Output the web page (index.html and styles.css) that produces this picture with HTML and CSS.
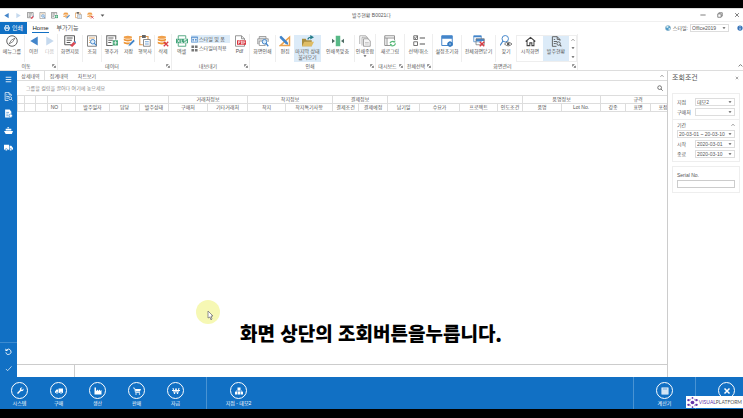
FILE: index.html
```html
<!DOCTYPE html>
<html lang="ko">
<head>
<meta charset="utf-8">
<title>발주현황</title>
<link rel="stylesheet" href="styles.css">
</head>
<body>
<svg class="defs" aria-hidden="true">
  <symbol id="compass" viewBox="0 0 16 16"><circle cx="8" cy="8" r="7" fill="none" stroke="#555" stroke-width="1.2"/><path d="M12 4 9 9 4 12 7 7Z" fill="none" stroke="#666"/></symbol>
  <symbol id="prev" viewBox="0 0 16 16"><path d="M13 2v12L3 8Z" fill="#4385ca"/></symbol>
  <symbol id="next" viewBox="0 0 16 16"><path d="M3 2v12l10-6Z" fill="#c5d9ee"/></symbol>
  <symbol id="erase" viewBox="0 0 16 16"><path d="M10 13H1V1h13v8M3.500 4h8M3.500 7h7M3.500 10h5" fill="none" stroke="#555" stroke-width="1.300"/><path d="m8 14 5-5 3 2-5 5Z" fill="#d94a56"/><path d="m13 9 1-1 2 1v2Z" fill="#4385ca"/></symbol>
  <symbol id="query" viewBox="0 0 16 16"><path d="M2 1h12v14H2Z" fill="#fff" stroke="#777" stroke-width="1.200"/><path d="M4 4h8M4 7h2M4 10h2" stroke="#d99748"/><circle cx="9" cy="9" r="3" fill="#e4f1fb" stroke="#4385ca" stroke-width="1.300"/><path d="m11 11 3 3" stroke="#4385ca" stroke-width="1.500"/></symbol>
  <symbol id="addrow" viewBox="0 0 16 16"><path d="M9 14H1V1h12v5M3 4h7M3 7h6M3 10h4" fill="none" stroke="#666" stroke-width="1.400"/><path d="M9 7h7v7H9Z" fill="#48a878"/><path d="M12.500 8v5M10 10.500h5" stroke="#fff"/></symbol>
  <symbol id="save" viewBox="0 0 16 16"><ellipse cx="6.500" cy="3" rx="5.500" ry="2" fill="#f0a04b"/><path d="M1 4.500c2 2 9 2 11 0v2.500c-2 2-9 2-11 0ZM1 8.500c2 2 9 2 11 0V11c-2 2-9 2-11 0Z" fill="#ee9434"/><path d="m7 15 1-3 6-6 2 2-6 6Z" fill="#4385ca" stroke="#fff" stroke-width=".5"/></symbol>
  <symbol id="copyrow" viewBox="0 0 16 16"><path d="M5 13H1V2h11v4" fill="none" stroke="#e29a4e" stroke-width="1.600"/><path d="M4 0h5v4H4Z" fill="#666"/><path d="M6 6h9v9H6Z" fill="#fff" stroke="#666"/><path d="M8 9h5M8 12h5" stroke="#4385ca"/></symbol>
  <symbol id="delete" viewBox="0 0 16 16"><ellipse cx="6.500" cy="3" rx="5.500" ry="2" fill="#f0a04b"/><path d="M1 4.500c2 2 9 2 11 0v2.500c-2 2-9 2-11 0ZM1 8.500c2 2 9 2 11 0V11c-2 2-9 2-11 0Z" fill="#ee9434"/><path d="m9 9 6 6m0-6-6 6" stroke="#d83b45" stroke-width="1.700"/></symbol>
  <symbol id="excel" viewBox="0 0 16 16"><path d="M3 5V1h10v4M3 11v4h10v-4" fill="#fff" stroke="#58a985" stroke-width="1.300"/><path d="M0 5h16v6H0Z" fill="#43a47a"/><path d="m2 6 3 4m0-4-3 4M7 6v4h2M14 6h-3v2h3v2h-3" fill="none" stroke="#fff"/></symbol>
  <symbol id="list" viewBox="0 0 16 16"><path d="M1 2h14v12H1Z" fill="#fff" stroke="#4385ca" stroke-width="1.500"/><path d="M1 4h14M3 8h4m2 0h4M3 11h4m2 0h4" stroke="#4385ca" stroke-width="2"/></symbol>
  <symbol id="tiles" viewBox="0 0 16 16"><path d="M1 1h6v6H1ZM9 1h6v6H9ZM1 9h6v6H1ZM9 9h6v6H9Z" fill="#777"/></symbol>
  <symbol id="pdf" viewBox="0 0 16 16"><path d="M2 1h8l4 4v10H2Z" fill="#fff" stroke="#777"/><path d="M10 1v4h4" fill="none" stroke="#777"/><path d="M4 7h12v6H4Z" fill="#d8343e"/><path d="M6 12V8h2v2H6M10 8v4h1V8ZM13 12V8h2m-2 2h2" fill="none" stroke="#fff" stroke-width=".8"/></symbol>
  <symbol id="preview" viewBox="0 0 16 16"><path d="M3 5V2h9v3M2 12H1V5h14v4" fill="#e3e6e8" stroke="#888"/><path d="M3 8h8v6H3Z" fill="#fff" stroke="#888"/><circle cx="10" cy="9" r="3" fill="#d7eafa" stroke="#4385ca" stroke-width="1.300"/><path d="m12 11 3 4" stroke="#4385ca" stroke-width="1.700"/></symbol>
  <symbol id="edit" viewBox="0 0 16 16"><path d="M2 14h12V3Z" fill="none" stroke="#eba24d" stroke-width="2"/><path d="m1 2 2-1 9 9v3L9 12 1 4Z" fill="#4385ca"/></symbol>
  <symbol id="folder" viewBox="0 0 16 16"><path d="M0 5h5l1 2h7v8H0Z" fill="#a88d40"/><path d="M3 9h13l-3 6H0Z" fill="#dfbd65"/><path d="M8 6c0-3 2-3 4-3" fill="none" stroke="#257c89" stroke-width="1.600"/><path d="m11 0 5 3-5 3Z" fill="#257c89"/></symbol>
  <symbol id="fit" viewBox="0 0 16 16"><path d="M5 1h6v14H5Z" fill="#58b987"/><path d="m0 5 4 3-4 3ZM16 5l-4 3 4 3Z" fill="#4f6d65"/></symbol>
  <symbol id="printall" viewBox="0 0 16 16"><path d="M1 12V1h8l2 3" fill="#fff" stroke="#999"/><path d="M4 14V3h7l2 3" fill="#fff" stroke="#999"/><path d="M6 5h6l3 3v7H6Z" fill="#f5f5f5" stroke="#888"/><path d="M8 10h5M8 12h5" stroke="#bbb"/></symbol>
  <symbol id="refresh" viewBox="0 0 16 16"><path d="M8 14H1V1h13v6M1 4h13M4 4v10" fill="none" stroke="#888" stroke-width="1.200"/><path d="M8 11a4 3 0 0 1 6-2m1 2a4 3 0 0 1-6 3" fill="none" stroke="#56b777" stroke-width="1.500"/><path d="M15 7v3h-3ZM8 15v-3h3Z" fill="#56b777"/></symbol>
  <symbol id="select" viewBox="0 0 16 16"><path d="M1 1h5v5H1ZM1 9h5v5H1Z" fill="none" stroke="#666" stroke-width="1.200"/><path d="m2 3 1 2 3-4" fill="none" stroke="#555"/><path d="M9 4h7M9 12h7" stroke="#555" stroke-width="1.600"/></symbol>
  <symbol id="reset" viewBox="0 0 16 16"><path d="M1 1h14v13H1Z" fill="#fff" stroke="#4385ca" stroke-width="1.300"/><path d="M1 1h14v4H1Z" fill="#4385ca"/><circle cx="12" cy="12" r="2.500" fill="#fff" stroke="#347ac0" stroke-width="2"/><path d="M12 8v8M8 12h8" stroke="#347ac0"/></symbol>
  <symbol id="closeall" viewBox="0 0 16 16"><path d="M1 1h10v8H1Z" fill="#fff" stroke="#4385ca"/><path d="M1 1h10v2H1ZM4 5h11v3H4Z" fill="#4385ca"/><path d="M4 5h11v8H4Z" fill="none" stroke="#777"/><path d="m9 9 6 6m0-6-6 6" stroke="#d83b45" stroke-width="1.900"/></symbol>
  <symbol id="find" viewBox="0 0 16 16"><circle cx="7" cy="5" r="4.300" fill="none" stroke="#4385ca" stroke-width="1.300"/><path d="m4 8-4 6" stroke="#4385ca" stroke-width="1.600"/><path d="M6 12q4-5 10 0-5 5-10 0Z" fill="#fff" stroke="#555"/><circle cx="11" cy="12" r="1.800" fill="#555"/></symbol>
  <symbol id="home" viewBox="0 0 16 16"><path d="m1 8 7-6 7 6M3 7v7h4v-4h3v4h3V7" fill="none" stroke="#444" stroke-width="1.500"/></symbol>
  <symbol id="order" viewBox="0 0 16 16"><path d="M13 7V5L9 1H2v14h6M9 1v4h4M4 5h2M4 8h5M4 11h3" fill="none" stroke="currentColor" stroke-width="1.300"/><circle cx="11" cy="11" r="2.500" fill="none" stroke="currentColor" stroke-width="1.300"/><path d="m13 13 2 2" stroke="currentColor" stroke-width="1.500"/></symbol>
  <symbol id="report" viewBox="0 0 16 16"><path d="M2 1h8l3 4v10H2Z" fill="currentColor"/><path d="M4 6h5M4 9h4M4 12h4" stroke="#1170c4"/><circle cx="12" cy="12" r="3" fill="currentColor" stroke="#1170c4"/></symbol>
  <symbol id="ship" viewBox="0 0 16 16"><path d="M0 9h16l-2 5H3ZM3 5h10v3H3ZM6 2h3v2H6Z" fill="currentColor"/></symbol>
  <symbol id="printer" viewBox="0 0 16 16"><path d="M4 6V1h8v5M3 11H1V6h14v5h-2M4 9h8v6H4Z" fill="none" stroke="currentColor" stroke-width="2"/></symbol>
  <symbol id="truck" viewBox="0 0 16 16"><path d="M0 3h9v9H0ZM10 5h3l3 4v3h-6Z" fill="currentColor"/><circle cx="4" cy="12" r="2" fill="currentColor" stroke="#1170c4"/><circle cx="12" cy="12" r="2" fill="currentColor" stroke="#1170c4"/></symbol>
  <symbol id="delivery" viewBox="0 0 16 16"><path d="M16 3H7v9h9ZM6 5H3L0 9v3h6Z" fill="currentColor"/><circle cx="12" cy="12" r="2" fill="currentColor" stroke="#1170c4"/><circle cx="4" cy="12" r="2" fill="currentColor" stroke="#1170c4"/></symbol>
  <symbol id="undo" viewBox="0 0 16 16"><path d="M4 4a6 6 0 1 1-2 6" fill="none" stroke="currentColor" stroke-width="2"/><path d="M1 1v6h6Z" fill="currentColor"/></symbol>
  <symbol id="check" viewBox="0 0 16 16"><path d="m2 9 4 4 9-10" fill="none" stroke="currentColor" stroke-width="1.500"/></symbol>
  <symbol id="menu" viewBox="0 0 16 16"><path d="M3 4h10M3 8h10M3 12h10" stroke="currentColor" stroke-width="1.500"/></symbol>
  <symbol id="wrench" viewBox="0 0 16 16"><path d="m2 12 6-6c-1-3 1-6 5-5l-3 3 2 2 3-3c1 4-2 6-5 5l-6 6Z" fill="currentColor"/></symbol>
  <symbol id="factory" viewBox="0 0 16 16"><path d="M1 15V1h3v7l4-3v3l4-3v3l3-2v9Z" fill="currentColor"/></symbol>
  <symbol id="cart" viewBox="0 0 16 16"><path d="M0 2h3l2 9h9" fill="none" stroke="currentColor" stroke-width="1.500"/><path d="M4 4h12l-2 5H5Z" fill="currentColor"/><circle cx="6" cy="14" r="1.500" fill="currentColor"/><circle cx="13" cy="14" r="1.500" fill="currentColor"/></symbol>
  <symbol id="won" viewBox="0 0 16 16"><path d="m2 2 3 12L8 3l3 11 3-12M0 7h16" fill="none" stroke="currentColor" stroke-width="2"/></symbol>
  <symbol id="tree" viewBox="0 0 16 16"><path d="M5 1h6v5H5ZM0 10h5v5H0ZM6 10h4v5H6ZM11 10h5v5h-5Z" fill="currentColor"/><path d="M8 5v5M2 10V8h12v2" fill="none" stroke="currentColor" stroke-width="1.500"/></symbol>
  <symbol id="calc" viewBox="0 0 16 16"><path d="M1 1h14v14H1Z" fill="currentColor"/><path d="M3 4h10M3 8h2m2 0h2m2 0h2M3 12h2m2 0h2m2 0h2" stroke="#1170c4" stroke-width="1.500"/></symbol>
  <symbol id="close" viewBox="0 0 16 16"><path d="m3 3 10 10M13 3 3 13" stroke="currentColor" stroke-width="3"/></symbol>
  <symbol id="thinclose" viewBox="0 0 16 16"><path d="m3 3 10 10M13 3 3 13" stroke="currentColor" stroke-width="2"/></symbol>
  <symbol id="restore" viewBox="0 0 16 16"><path d="M2 5h9v9H2ZM5 5V2h9v9h-3" fill="none" stroke="currentColor" stroke-width="1.800"/></symbol>
  <symbol id="minus" viewBox="0 0 16 16"><path d="M1 8h14" stroke="currentColor" stroke-width="2"/></symbol>
  <symbol id="search" viewBox="0 0 16 16"><circle cx="7" cy="7" r="5" fill="none" stroke="currentColor" stroke-width="1.700"/><path d="m11 11 4 4" stroke="currentColor" stroke-width="2"/></symbol>
  <symbol id="down" viewBox="0 0 16 16"><path d="M2 5h12l-6 7Z" fill="currentColor"/></symbol>
  <symbol id="up" viewBox="0 0 16 16"><path d="m2 11 6-6 6 6" fill="none" stroke="currentColor" stroke-width="2.500"/></symbol>
  <symbol id="launch" viewBox="0 0 16 16"><path d="M2 10V2h8M5 5l8 8M14 7v7H7" fill="none" stroke="currentColor" stroke-width="2.500"/></symbol>
  <symbol id="globe" viewBox="0 0 16 16"><circle cx="8" cy="8" r="7" fill="#4d9bc9" stroke="#9eb6c4"/><path d="m3 4 5-2 2 3-3 3-3-1ZM9 9l4-2 1 4-4 3Z" fill="#d5eaf0"/></symbol>
  <symbol id="info" viewBox="0 0 16 16"><circle cx="8" cy="8" r="7" fill="#3874b9"/><path d="M8 7v6M8 3v2" stroke="#fff" stroke-width="2"/></symbol>
</svg>
<div class="app">
  <header class="titlebar">
    <nav class="quick" aria-label="빠른 실행">
      <button aria-label="이전"><svg><use href="#prev"/></svg></button>
      <button aria-label="다음"><svg><use href="#next"/></svg></button>
      <button aria-label="화면지움"><svg><use href="#erase"/></svg></button>
      <button aria-label="조회"><svg><use href="#query"/></svg></button>
      <button aria-label="행추가"><svg><use href="#addrow"/></svg></button>
      <button aria-label="저장"><svg><use href="#save"/></svg></button>
      <button aria-label="행복사"><svg><use href="#copyrow"/></svg></button>
      <button aria-label="삭제"><svg><use href="#delete"/></svg></button>
      <button aria-label="더보기"><svg class="tiny"><use href="#down"/></svg></button>
    </nav>
    <h1>발주현황 B0021다</h1>
    <div class="window">
      <button aria-label="최소화"><svg><use href="#minus"/></svg></button>
      <button aria-label="이전 크기로"><svg><use href="#restore"/></svg></button>
      <button aria-label="닫기"><svg><use href="#thinclose"/></svg></button>
    </div>
  </header>
  <nav class="tabs">
    <button class="file"><svg><use href="#printer"/></svg>인쇄</button>
    <button class="tab current"><span>Home</span></button>
    <button class="tab"><span>부가기능</span></button>
    <div class="theme">
      <svg><use href="#globe"/></svg>
      <label for="style">스타일:</label>
      <span class="pick"><select id="style"><option>Office2019</option></select><svg><use href="#down"/></svg></span>
      <svg class="info"><use href="#info"/></svg>
    </div>
  </nav>
  <section class="ribbon">
    <div class="group move">
      <div class="tools">
        <button><svg><use href="#compass"/></svg>메뉴그룹</button>
        <button class="split"><svg><use href="#prev"/></svg>이전</button>
        <button disabled><svg><use href="#next"/></svg>다음</button>
      </div>
      <div class="caption"><span>이동</span><svg><use href="#launch"/></svg></div>
    </div>
    <div class="group data">
      <div class="tools">
        <button><svg><use href="#erase"/></svg>화면지움</button>
        <button class="split"><svg><use href="#query"/></svg>조회</button>
        <button class="split"><svg><use href="#addrow"/></svg>행추가</button>
        <button><svg><use href="#save"/></svg>저장</button>
        <button><svg><use href="#copyrow"/></svg>행복사</button>
        <button class="split"><svg><use href="#delete"/></svg>삭제</button>
      </div>
      <div class="caption"><span>데이터</span><svg><use href="#launch"/></svg></div>
    </div>
    <div class="group export">
      <div class="tools">
        <button><svg><use href="#excel"/></svg>엑셀</button>
        <div class="stack">
          <button class="on"><svg><use href="#list"/></svg>스타일 및 폼</button>
          <button><svg><use href="#tiles"/></svg>스타일미적용</button>
        </div>
        <button><svg><use href="#pdf"/></svg>Pdf</button>
      </div>
      <div class="caption"><span>내보내기</span><svg><use href="#launch"/></svg></div>
    </div>
    <div class="group print">
      <div class="tools">
        <button><svg><use href="#preview"/></svg>화면인쇄</button>
        <button class="split"><svg><use href="#edit"/></svg>편집</button>
        <button class="on"><svg><use href="#folder"/></svg>마지막 상태<br>불러오기</button>
        <button><svg><use href="#fit"/></svg>인쇄폭맞춤</button>
        <button class="split"><svg><use href="#printall"/></svg>인쇄종합<svg class="tiny"><use href="#down"/></svg></button>
      </div>
      <div class="caption"><span>인쇄</span><svg><use href="#launch"/></svg></div>
    </div>
    <div class="group dash">
      <div class="tools"><button><svg><use href="#refresh"/></svg>새로그림</button></div>
      <div class="caption"><span>대시보드</span><svg><use href="#launch"/></svg></div>
    </div>
    <div class="group pickall">
      <div class="tools"><button><svg><use href="#select"/></svg>선택/취소</button></div>
      <div class="caption"><span>전체선택</span><svg><use href="#launch"/></svg></div>
    </div>
    <div class="group screens">
      <div class="tools">
        <button><svg><use href="#reset"/></svg>설정초기화</button>
        <button class="split"><svg><use href="#closeall"/></svg>전체화면닫기</button>
        <button class="split"><svg><use href="#find"/></svg>찾기</button>
        <div class="gallery">
          <button><svg><use href="#home"/></svg>시작화면</button>
          <button class="on"><svg><use href="#order"/></svg>발주현황</button>
          <div class="scroll"><svg><use href="#up"/></svg><svg><use href="#down"/></svg><svg><use href="#down"/></svg></div>
        </div>
      </div>
      <div class="caption"><span>화면관리</span><svg><use href="#launch"/></svg></div>
    </div>
    <button class="collapse" aria-label="리본 접기"><svg><use href="#up"/></svg></button>
  </section>
  <div class="body">
    <nav class="side" aria-label="메뉴">
      <button aria-label="메뉴"><svg><use href="#menu"/></svg></button>
      <button aria-label="발주"><svg><use href="#order"/></svg></button>
      <button aria-label="보고서"><svg><use href="#report"/></svg></button>
      <button aria-label="선적"><svg><use href="#ship"/></svg></button>
      <button aria-label="배송"><svg><use href="#truck"/></svg></button>
      <div class="lower">
        <button aria-label="되돌리기"><svg><use href="#undo"/></svg></button>
        <button aria-label="확인"><svg><use href="#check"/></svg></button>
      </div>
    </nav>
    <main>
      <div class="views">
        <button class="current">상세내역</button>
        <button>집계내역</button>
        <button>차트보기</button>
        <svg><use href="#up"/></svg>
      </div>
      <div class="groupby"><span>그룹할 컬럼을 끌어다 여기에 놓으세요</span><svg><use href="#search"/></svg></div>
      <div class="gridwrap">
        <table>
          <colgroup><col class="c7"><col class="c11"><col class="c12"><col class="c14"><col class="c14"><col class="c34"><col class="c30"><col class="c29"><col class="c39"><col class="c40"><col class="c38"><col class="c47"><col class="c26"><col class="c29"><col class="c32"><col class="c40"><col class="c38"><col class="c25"><col class="c39"><col class="c39"><col class="c25"><col class="c25"><col class="c25"></colgroup>
          <thead>
            <tr><th></th><th></th><th></th><th colspan="2"></th><th colspan="3"></th><th colspan="2">거래처정보</th><th colspan="2">착지정보</th><th colspan="2">결제정보</th><th colspan="4"></th><th colspan="2">품명정보</th><th colspan="3">규격</th></tr>
            <tr><th></th><th></th><th></th><th>NO</th><th></th><th>발주일자</th><th>담당</th><th>발주상태</th><th>구매처</th><th>기타거래처</th><th>착지</th><th>착지특기사항</th><th>결제조건</th><th>결제예정</th><th>납기일</th><th>수요가</th><th>프로젝트</th><th>인도조건</th><th>품명</th><th>Lot No.</th><th>강종</th><th>표면</th><th>포장</th></tr>
          </thead>
        </table>
      </div>
      <div class="total"><span></span></div>
      <p class="subtitle">화면 상단의 조회버튼을누릅니다.</p>
      <svg class="pointer" viewBox="0 0 24 24"><circle cx="12" cy="12" r="12" fill="#f6f8b4"/><path d="M12 11v7l2-1 1 3 1-1-1-3h2Z" fill="#fff" stroke="#777" stroke-width=".8"/></svg>
    </main>
    <aside>
      <h2>조회조건<svg><use href="#thinclose"/></svg></h2>
      <form>
        <div class="card target">
          <div class="field"><label for="branch">지점</label><span class="pick"><select id="branch"><option>데모2</option></select><svg><use href="#down"/></svg></span></div>
          <div class="field"><label for="buyer">구매처</label><span class="pick"><select id="buyer"><option></option></select><svg><use href="#down"/></svg></span></div>
        </div>
        <div class="card period">
          <div class="legend"><label for="range">기간</label><svg><use href="#up"/></svg></div>
          <span class="pick wide"><select id="range"><option>20-03-01 ~ 20-03-10</option></select><svg><use href="#down"/></svg></span>
          <div class="field"><label for="from">시작</label><span class="pick"><select id="from"><option>2020-03-01</option></select><svg><use href="#down"/></svg></span></div>
          <div class="field"><label for="to">종료</label><span class="pick"><select id="to"><option>2020-03-10</option></select><svg><use href="#down"/></svg></span></div>
        </div>
        <div class="card serial"><label for="serial">Serial No.</label><input id="serial" type="text"></div>
      </form>
    </aside>
  </div>
  <footer>
    <button><i><svg><use href="#wrench"/></svg></i>시스템</button>
    <button><i><svg><use href="#delivery"/></svg></i>구매</button>
    <button><i><svg><use href="#factory"/></svg></i>생산</button>
    <button><i><svg><use href="#cart"/></svg></i>판매</button>
    <button><i><svg><use href="#won"/></svg></i>자금</button>
    <button class="site"><i><svg><use href="#tree"/></svg></i>지점 - 데모2</button>
    <button class="calc"><i><svg><use href="#calc"/></svg></i>계산기</button>
    <button class="exit" aria-label="종료"><i><svg><use href="#close"/></svg></i></button>
    <div class="brand">
      <svg viewBox="0 0 24 24"><g fill="#6532a8"><circle cx="12" cy="12" r="4"/><circle cx="12" cy="2" r="2"/><circle cx="12" cy="22" r="2"/><circle cx="3" cy="7" r="2.500"/><circle cx="21" cy="7" r="2.500"/><circle cx="3" cy="17" r="2.500"/><circle cx="21" cy="17" r="2.500"/></g><path d="M8 5H6v4M16 5h2v4M8 19H6v-4M16 19h2v-4" fill="none" stroke="#8b6bbd" stroke-width="2"/></svg>
      <span><b>VISUAL</b>PLATFORM</span>
    </div>
  </footer>
</div>
</body>
</html>
```
FILE: styles.css
```css
* { box-sizing: border-box; }
html { height: 100%; }
body {
  margin: 0;
  height: 100%;
  padding: 8px 0 9px;
  background: #000;
  color: #555;
  font: 5px/8px "Liberation Sans", "Noto Sans CJK KR", sans-serif;
  overflow: hidden;
}
button, input, select { font: inherit; color: inherit; }
button { border: 0; padding: 0; background: none; white-space: nowrap; }
svg { display: block; flex: none; width: 8px; height: 8px; }
.defs { position: absolute; width: 0; height: 0; }
.tiny { width: 5px; height: 5px; }
.app { height: 100%; display: flex; flex-direction: column; background: #fff; }

.titlebar { display: grid; grid-template-columns: 1fr auto 1fr; align-items: center; height: 14px; border-top: 1px solid #ddd; border-bottom: 1px solid #f0f0f0; }
.quick { display: flex; }
.quick button { width: 12px; display: grid; place-items: center; }
.titlebar svg { width: 7px; height: 7px; }
.titlebar svg.tiny { width: 5px; height: 5px; }
h1 { margin: 0; font-size: 5px; font-weight: 400; }
.window { display: flex; justify-content: flex-end; gap: 11px; padding-right: 3px; }
.window svg { width: 6px; height: 6px; }

.tabs { display: flex; height: 12px; align-items: stretch; }
.tabs button { font-size: 6px; }
.tabs .file { display: flex; align-items: center; justify-content: center; gap: 2px; width: 27px; background: #1170c4; color: #fff; }
.file svg { width: 6px; height: 6px; }
.tabs .tab { width: 27px; }
.tab span { padding-bottom: 1px; }
.tab.current span { border-bottom: 1px solid #1170c4; color: #222; }
.theme { display: flex; align-items: center; gap: 2px; margin-left: auto; }
.theme > svg { width: 6px; height: 6px; }
.theme .pick { width: 39px; margin-right: 6px; }
.pick { position: relative; display: flex; align-items: center; border: 1px solid #ddd; background: #fff; height: 8px; }
.pick select { appearance: none; width: 100%; height: 6px; padding: 0 5px 0 1px; border: 0; background: none; line-height: 6px; }
.pick svg { position: absolute; right: 2px; width: 4px; height: 4px; pointer-events: none; }

.ribbon { display: flex; height: 37px; border-bottom: 1px solid #ddd; }
.group { display: flex; flex-direction: column; border-right: 1px solid #eee; }
.tools { display: grid; height: 28px; padding-top: 1px; }
.tools button { display: flex; flex-direction: column; align-items: center; line-height: 6px; min-width: 0; overflow: visible; }
.tools button > svg { width: 12px; height: 12px; margin-bottom: 1px; }
.tools button > svg.tiny { width: 4px; height: 4px; margin: 0; }
.tools button:disabled { color: #bbb; }
.tools .split { border-left: 1px solid #eee; }
.tools .on { background: #dcebf8; }
.caption { display: flex; align-items: center; height: 8px; }
.caption span { flex: 1; text-align: center; }
.caption svg { width: 4px; height: 4px; margin-right: 1px; }
.move .tools { grid-template-columns: 24px 18px 15px; }
.data .tools { grid-template-columns: 24px 19px 20px 15px 18px 17px; }
.export .tools { grid-template-columns: 19px 39px 19px; }
.print .tools { grid-template-columns: 25px 19px 27px 33px 21px; }
.dash .tools { grid-template-columns: 28px; }
.pickall .tools { grid-template-columns: 27px; }
.screens .tools { grid-template-columns: 28px 34px 21px 61px; }
.stack { display: flex; flex-direction: column; gap: 1px; }
.stack button { flex-direction: row; gap: 1px; height: 8px; }
.stack button > svg { width: 7px; height: 7px; margin: 0; }
.gallery { display: flex; border: 1px solid #eee; }
.gallery button { width: 26px; }
.gallery button > svg { width: 11px; height: 11px; }
.scroll { flex: 1; display: flex; flex-direction: column; align-items: center; justify-content: space-around; }
.scroll svg { width: 4px; height: 4px; }
.collapse { margin: auto 0 2px auto; }
.collapse svg { width: 5px; height: 5px; }

.body { flex: 1; display: flex; min-height: 0; }
.side { display: flex; flex-direction: column; align-items: center; width: 17px; background: #1170c4; color: #fff; }
.side button { height: 17px; display: grid; place-items: center; }
.side svg { width: 9px; height: 9px; }
.side .lower { display: flex; flex-direction: column; align-items: center; width: 100%; margin-top: auto; border-top: 1px solid #3d8bd0; }
.side .lower svg { width: 7px; height: 7px; }

main { position: relative; flex: 1; display: flex; flex-direction: column; min-width: 0; border-right: 1px solid #ccc; }
.views { display: flex; align-items: center; height: 10px; border-bottom: 1px solid #ddd; }
.views button { width: 28px; height: 9px; }
.views .current { border-right: 1px solid #ddd; background: #fff; }
.views svg { width: 4px; height: 4px; margin: 0 3px 0 auto; }
.groupby { display: flex; align-items: center; justify-content: space-between; height: 14px; padding: 0 4px 0 9px; color: #888; }
.groupby svg { width: 6px; height: 6px; color: #333; }
.gridwrap { flex: 1; overflow: hidden; }
table { table-layout: fixed; width: 658px; border-collapse: collapse; }
th { height: 8px; padding: 0; border: 1px solid #ddd; font-weight: 400; line-height: 7px; white-space: nowrap; overflow: hidden; }
.c7 { width: 7px; } .c11 { width: 11px; } .c12 { width: 12px; } .c14 { width: 14px; }
.c25 { width: 25px; } .c26 { width: 26px; } .c29 { width: 29px; } .c30 { width: 30px; }
.c32 { width: 32px; } .c34 { width: 34px; } .c38 { width: 38px; } .c39 { width: 39px; }
.c40 { width: 40px; } .c47 { width: 47px; }
.total { height: 13px; border-top: 1px solid #ccc; }
.total span { display: block; width: 58px; height: 100%; border-right: 1px solid #ccc; }
.subtitle { position: absolute; left: 223px; bottom: 30px; margin: 0; color: #000; font: 900 19px/28px "Noto Sans CJK KR", sans-serif; white-space: nowrap; }
.pointer { position: absolute; left: 179px; bottom: 53px; width: 24px; height: 24px; }

aside { width: 75px; padding: 0 3px 0 4px; }
h2 { display: flex; align-items: center; justify-content: space-between; margin: 0; height: 22px; padding: 0 1px 8px 0; font-size: 7px; font-weight: 400; }
h2 svg { width: 4px; height: 4px; }
form { display: flex; flex-direction: column; }
.card { display: flex; flex-direction: column; gap: 1px; padding: 1px 4px; border: 1px solid #eee; }
.target { height: 26px; padding-top: 3px; border-bottom: 0; }
.field { display: flex; align-items: center; justify-content: space-between; height: 9px; }
.field .pick { width: 40px; }
.period { height: 43px; }
.legend { display: flex; align-items: center; justify-content: space-between; height: 8px; }
.legend svg { width: 4px; height: 4px; }
.serial { height: 27px; margin-top: 4px; padding-top: 4px; }
.serial input { width: 100%; height: 8px; padding: 0 2px; border: 1px solid #ccc; }

footer { position: relative; display: flex; height: 32px; background: #1170c4; color: #fff; }
footer button { width: 39px; padding-top: 5px; display: flex; flex-direction: column; align-items: center; }
footer i { display: grid; place-items: center; width: 17px; height: 17px; border: 1px solid #fff; border-radius: 50%; }
footer .site { width: 64px; margin-left: 11px; border-left: 1px solid #4993d3; }
footer .calc { width: 62px; margin-left: auto; border-left: 1px solid #4993d3; }
footer .exit { width: 48px; border-left: 1px solid #4993d3; }
footer .exit i { margin-left: 14px; }
.brand { position: absolute; right: 0; bottom: 1px; display: flex; align-items: center; gap: 1px; min-width: 55px; height: 12px; padding: 0 1px; background: #fff; color: #555; font-family: Lato, sans-serif; }
.brand svg { width: 11px; height: 11px; }
.brand b { color: #6532a8; font-weight: 400; }
```
